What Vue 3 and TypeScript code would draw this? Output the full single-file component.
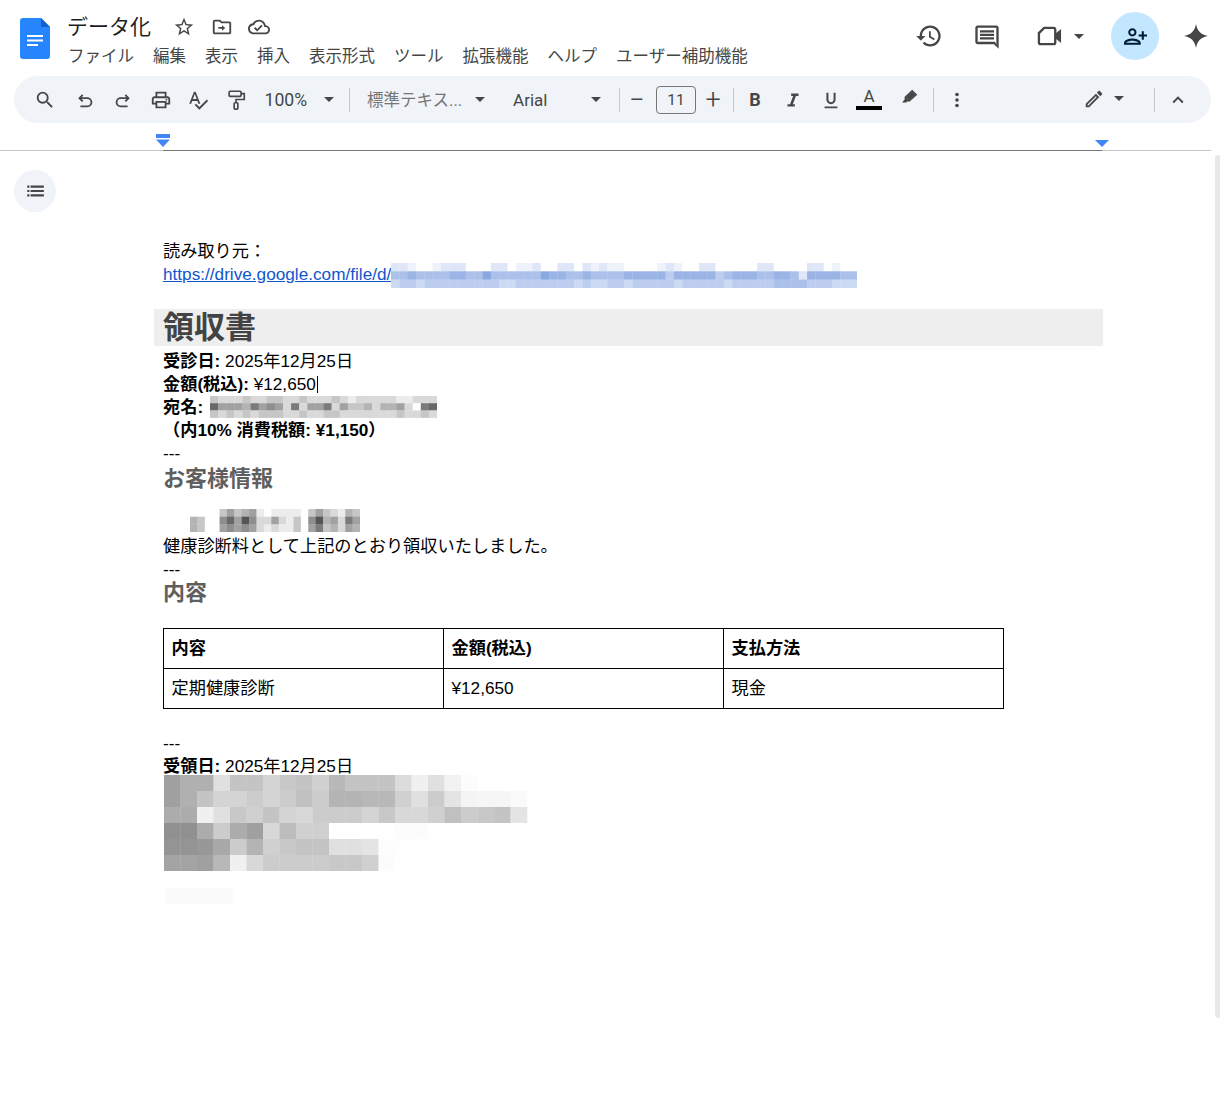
<script setup lang="ts">
interface Cell { x: number; y: number; w: number; h: number; fill: string }

const mix = (level: number, r: number, g: number, b: number): string => {
  const t = level / 9
  const c = (v: number) => Math.round(255 - (255 - v) * t)
  return `rgb(${c(r)},${c(g)},${c(b)})`
}

const fromLevels = (rows: string[], width: number, ch: number, base: [number, number, number]): Cell[] => {
  const out: Cell[] = []
  rows.forEach((row, ry) => {
    const cw = width / row.length
    row.split('').forEach((l, i) => {
      out.push({ x: i * cw, y: ry * ch, w: cw + 0.3, h: ch + 0.3, fill: mix(Number(l), base[0], base[1], base[2]) })
    })
  })
  return out
}

const urlMosaic = fromLevels(
  [
    '22100122200022011200220212110000121002200000220000220100',
    '55655556655755555576655655556666646666645666556652666655',
    '34434444444443344444443433443444443444443444445555444333',
  ],
  466, 8.3, [105, 143, 218],
)

const nameMosaic = fromLevels(
  [
    '3222322332232223212222211222',
    '8555475652725572533424452078',
    '3232323332232233222222232232',
  ],
  227, 7.2, [85, 85, 85],
)

const clientMosaic = fromLevels(
  [
    '00003534510111103532143',
    '43006859622521306945275',
    '43005656521211305734254',
  ],
  170, 7.7, [85, 85, 85],
)

const bigRows = [
  'a0 b0 b0 e0 c4 c4 d4 c8 c4 d0 b8 c4 c4 c4 dc f0 e0 f2 fc ff ff ff',
  'a0 b0 c4 d4 d4 cc d4 cc c0 cc b4 b4 b8 b8 d0 e0 cc e4 f4 f6 f6 fa',
  'ac ac f0 e0 c8 d0 c4 d4 d8 cc cc cc d4 c8 d8 d8 d0 c0 cc c8 c4 e4',
  '90 90 ac cc ac a0 d8 bc d0 d0 ff ff ff ff fc fc ff ff ff ff ff ff',
  '94 94 98 a8 cc b4 d0 c8 c4 c4 e0 e0 e4 fd fe ff ff ff ff ff ff ff',
  'a4 a4 a0 b8 f0 d8 cc cc cc cc c8 c8 d0 fc ff ff ff ff ff ff ff ff',
]
const bigMosaic: Cell[] = bigRows.flatMap((row, ry) =>
  row.split(' ').map((hex, i) => ({ x: i * 16.5, y: ry * 16, w: 16.8, h: 16.3, fill: `#${hex}${hex}${hex}` })),
)

const menus = ['ファイル', '編集', '表示', '挿入', '表示形式', 'ツール', '拡張機能', 'ヘルプ', 'ユーザー補助機能']
const headers = ['内容', '金額(税込)', '支払方法']
const cells = ['定期健康診断', '¥12,650', '現金']
</script>

<template>
  <div class="page">
    <header class="appbar">
      <svg class="logo" viewBox="0 0 30 41">
        <path d="M3 0h18l9 9v29a3 3 0 0 1-3 3H3a3 3 0 0 1-3-3V3a3 3 0 0 1 3-3z" fill="#2684fc" />
        <path d="M21 0l9 9h-9z" fill="#1a5fc8" />
        <path d="M7 17h16v2H7zM7 21.500h16v2H7zM7 26h11v2H7z" fill="#fff" />
      </svg>
      <div class="titles">
        <div class="title-row">
          <span class="doc-name">データ化</span>
          <svg class="ic title-star" viewBox="0 0 24 24"><path d="M22 9.240l-7.190-.62L12 2 9.190 8.630 2 9.240l5.460 4.730L5.820 21 12 17.270 18.180 21l-1.630-7.030L22 9.240zM12 15.400l-3.760 2.270 1-4.280-3.320-2.880 4.380-.38L12 6.100l1.710 4.040 4.380.38-3.320 2.880 1 4.280L12 15.400z" /></svg>
          <svg class="ic title-folder" viewBox="0 0 24 24"><path d="M20 6h-8l-2-2H4c-1.110 0-1.990.89-1.990 2L2 18c0 1.110.89 2 2 2h16c1.110 0 2-.89 2-2V8c0-1.110-.89-2-2-2zm0 12H4V6h5.170l2 2H20v10zm-8-4H8v-2h4v-2l3.500 3-3.500 3v-2z" /></svg>
          <svg class="ic title-cloud" viewBox="0 0 24 24"><path d="M19.350 10.040C18.670 6.590 15.640 4 12 4 9.110 4 6.600 5.640 5.350 8.040 2.340 8.360 0 10.910 0 14c0 3.310 2.690 6 6 6h13c2.760 0 5-2.240 5-5 0-2.640-2.050-4.780-4.650-4.960zM19 18H6c-2.210 0-4-1.790-4-4 0-2.050 1.530-3.760 3.560-3.970l1.070-.11.5-.95C8.080 7.140 9.940 6 12 6c2.620 0 4.880 1.860 5.390 4.430l.3 1.500 1.530.11c1.560.1 2.780 1.410 2.780 2.960 0 1.650-1.350 3-3 3zm-9-3.820l-2.090-2.090L6.500 13.500 10 17l6.010-6.010-1.410-1.410z" /></svg>
        </div>
        <nav class="menu">
          <span v-for="m in menus" :key="m">{{ m }}</span>
        </nav>
      </div>
      <div class="actions">
        <svg class="ic big history" viewBox="0 0 24 24"><path d="M13 3c-4.970 0-9 4.030-9 9H1l3.890 3.890.07.14L9 12H6c0-3.870 3.130-7 7-7s7 3.130 7 7-3.130 7-7 7c-1.930 0-3.680-.79-4.940-2.060l-1.420 1.420C8.270 19.990 10.510 21 13 21c4.970 0 9-4.030 9-9s-4.030-9-9-9zm-1 5v5l4.280 2.540.72-1.210-3.500-2.080V8H12z" /></svg>
        <svg class="ic big comment" viewBox="0 0 24 24"><path d="M20 3H4c-1.100 0-2 .9-2 2v12c0 1.100.9 2 2 2h14l4 4V5c0-1.100-.9-2-2-2zm0 16.170L18.830 17H4V5h16v14.170zM6 7h12v2H6zm0 3h12v2H6zm0 3h12v2H6z" /></svg>
        <svg class="ic big video" viewBox="0 0 24 24">
          <path d="M7 5h8a1.500 1.500 0 0 1 1.500 1.500v11A1.500 1.500 0 0 1 15 19H4a1.500 1.500 0 0 1-1.500-1.500v-8z" fill="none" stroke="#444746" stroke-width="2" />
          <path d="M16.500 10l5-4v12l-5-4z" />
        </svg>
        <i class="caret video-caret"></i>
        <button class="share">
          <svg class="ic share-ic" viewBox="0 0 24 24"><path transform="matrix(-1 0 0 1 24 0)" d="M15 12c2.210 0 4-1.790 4-4s-1.790-4-4-4-4 1.790-4 4 1.790 4 4 4zm0-6c1.100 0 2 .9 2 2s-.9 2-2 2-2-.9-2-2 .9-2 2-2zm0 8c-2.670 0-8 1.340-8 4v2h16v-2c0-2.660-5.330-4-8-4zm-6 4c.22-.72 3.310-2 6-2 2.700 0 5.800 1.290 6 2H9zm-3-3v-3h3v-2H6V7H4v3H1v2h3v3h2z" /></svg>
        </button>
        <svg class="ic spark" viewBox="0 0 24 24"><path d="M12 1C13.200 7.500 16.500 10.800 23 12 16.500 13.200 13.200 16.500 12 23 10.800 16.500 7.500 13.200 1 12 7.500 10.800 10.800 7.500 12 1z" /></svg>
      </div>
    </header>

    <div class="toolbar">
      <button class="tb search-btn"><svg class="ic tool" viewBox="0 0 24 24"><path d="M15.500 14h-.79l-.28-.27A6.470 6.470 0 0 0 16 9.500 6.500 6.500 0 1 0 9.500 16c1.610 0 3.090-.59 4.230-1.570l.27.28v.79l5 4.990L20.490 19l-4.990-5zm-6 0C7.010 14 5 11.990 5 9.500S7.010 5 9.500 5 14 7.010 14 9.500 11.990 14 9.500 14z" /></svg></button>
      <button class="tb"><svg class="ic tool stroke" viewBox="0 0 24 24"><path d="M9.500 6.500L6 10l3.500 3.500M6 10h8.500a4.500 4.500 0 0 1 0 9H7" /></svg></button>
      <button class="tb"><svg class="ic tool stroke" viewBox="0 0 24 24"><path d="M14.500 6.500L18 10l-3.500 3.500M18 10H9.500a4.500 4.500 0 0 0 0 9H17" /></svg></button>
      <button class="tb"><svg class="ic tool" viewBox="0 0 24 24"><path d="M19 8h-1V3H6v5H5c-1.660 0-3 1.340-3 3v6h4v4h12v-4h4v-6c0-1.660-1.340-3-3-3zM8 5h8v3H8V5zm8 12v2H8v-4h8v2zm2-2v-2H6v2H4v-4c0-.55.45-1 1-1h14c.55 0 1 .45 1 1v4h-2z" /><circle cx="18" cy="11.500" r="1" /></svg></button>
      <button class="tb"><svg class="ic tool" viewBox="0 0 24 24"><path d="M12.450 16h2.090L9.430 3H7.570L2.460 16h2.090l1.120-3h5.640l1.140 3zm-6.020-5L8.500 5.480 10.570 11H6.430zm15.160.59l-8.090 8.090L9.830 16l-1.410 1.410 5.090 5.090L23 13l-1.410-1.410z" /></svg></button>
      <button class="tb"><svg class="ic tool stroke paint" viewBox="0 0 24 24"><rect x="4.500" y="2.500" width="13" height="5.500" rx="1" /><path d="M17.500 5H21v6.500h-9V15" /><rect x="10" y="15" width="4" height="7" rx="1" /></svg></button>
      <span class="tb-text zoom-val">100%</span>
      <i class="caret zoom-caret"></i>
      <i class="sep sep-a"></i>
      <span class="tb-text style-val">標準テキス...</span>
      <i class="caret style-caret"></i>
      <span class="tb-text font-val">Arial</span>
      <i class="caret font-caret"></i>
      <i class="sep sep-b"></i>
      <span class="pm minus">−</span>
      <span class="size-box">11</span>
      <span class="pm plus">+</span>
      <i class="sep sep-c"></i>
      <button class="tb fmt bold">B</button>
      <button class="tb fmt"><svg class="ic tool" viewBox="0 0 24 24"><path d="M10 5v2.500h2.210l-3.420 9H6V19h8v-2.500h-2.210l3.420-9H18V5z" /></svg></button>
      <button class="tb fmt"><svg class="ic tool" viewBox="0 0 24 24"><path d="M12 16.500c2.900 0 5-2.100 5-5V4h-2.200v7.500c0 1.700-1.200 2.900-2.800 2.900s-2.800-1.200-2.800-2.900V4H7v7.500c0 2.900 2.100 5 5 5zM5 19v2h14v-2z" /></svg></button>
      <button class="tb color-a"><span class="a-letter">A</span><span class="a-bar"></span></button>
      <button class="tb hl"><svg class="ic tool" viewBox="0 0 24 24"><path d="M15.500 3l5.500 5.500-8.500 7.500-2-.5-1.500 1.500H4.500L7.500 13l-.5-2zM9.300 11.500l3.200 3 6-5.400-3-3z" /><path d="M9 11.200L15.400 5.500 19 9l-6.600 6z" /></svg></button>
      <i class="sep sep-d"></i>
      <button class="tb more"><svg class="ic tool" viewBox="0 0 24 24"><circle cx="12" cy="6" r="2" /><circle cx="12" cy="12" r="2" /><circle cx="12" cy="18" r="2" /></svg></button>
      <button class="tb pencil"><svg class="ic tool" viewBox="0 0 24 24"><path d="M3 17.250V21h3.750L17.810 9.940l-3.750-3.750L3 17.250zM5.920 19H5v-.92l9.060-9.060.92.92L5.920 19zM20.710 5.630l-2.340-2.340c-.2-.2-.45-.29-.71-.29s-.51.1-.7.29l-1.830 1.830 3.750 3.750 1.830-1.830c.39-.39.39-1.020 0-1.410z" /></svg></button>
      <i class="caret pencil-caret"></i>
      <i class="sep sep-e"></i>
      <button class="tb"><svg class="ic tool" viewBox="0 0 24 24"><path d="M7.410 15.410L12 10.830l4.590 4.580L18 14l-6-6-6 6z" /></svg></button>
    </div>

    <div class="ruler">
      <svg class="marker marker-left" viewBox="0 0 14 13"><path d="M0 0h14v4H0zM0 5.500h14L7 13z" /></svg>
      <svg class="marker marker-right" viewBox="0 0 14 7"><path d="M0 0h14L7 7z" /></svg>
      <div class="ruler-line">
        <span class="rl-side rl-left"></span>
        <span class="rl-mid"></span>
        <span class="rl-side rl-right"></span>
      </div>
    </div>

    <button class="outline-btn">
      <svg viewBox="0 0 18 18" class="outline-ic"><path d="M2 4h2v2H2zM5 4h12v2H5zM2 8h2v2H2zM5 8h12v2H5zM2 12h2v2H2zM5 12h12v2H5z" /></svg>
    </button>
    <i class="scroll-thumb"></i>

    <main class="doc">
      <p class="line">読み取り元：</p>
      <p class="line"><a class="link">https://drive.google.com/file/d/</a><svg class="mosaic url-mosaic" width="466" height="25"><rect v-for="(c, i) in urlMosaic" :key="i" :x="c.x" :y="c.y" :width="c.w" :height="c.h" :fill="c.fill" /></svg></p>
      <p class="line"></p>
      <h1 class="h1">領収書</h1>
      <p class="line"><b>受診日:</b> 2025年12月25日</p>
      <p class="line"><b>金額(税込):</b> ¥12,650<span class="cursor"></span></p>
      <p class="line"><b>宛名:</b> <svg class="mosaic name-mosaic" width="227" height="22"><rect v-for="(c, i) in nameMosaic" :key="i" :x="c.x" :y="c.y" :width="c.w" :height="c.h" :fill="c.fill" /></svg></p>
      <p class="line"><b>（内10% 消費税額: ¥1,150）</b></p>
      <p class="line">---</p>
      <h2 class="h2 first-h2">お客様情報</h2>
      <p class="line client-line"><svg class="mosaic client-mosaic" width="170" height="23"><rect v-for="(c, i) in clientMosaic" :key="i" :x="c.x" :y="c.y" :width="c.w" :height="c.h" :fill="c.fill" /></svg></p>
      <p class="line">健康診断料として上記のとおり領収いたしました。</p>
      <p class="line short-line">---</p>
      <h2 class="h2 second-h2">内容</h2>
      <table class="tbl">
        <tbody>
          <tr><th v-for="h in headers" :key="h">{{ h }}</th></tr>
          <tr><td v-for="c in cells" :key="c">{{ c }}</td></tr>
        </tbody>
      </table>
      <p class="line after-table">---</p>
      <p class="line"><b>受領日:</b> 2025年12月25日</p>
      <svg class="mosaic big-mosaic" width="365" height="96"><rect v-for="(c, i) in bigMosaic" :key="i" :x="c.x" :y="c.y" :width="c.w" :height="c.h" :fill="c.fill" /></svg>
      <div class="faint"></div>
    </main>
  </div>
</template>

<style scoped>
.page { position: relative; width: 1220px; height: 1117px; overflow: hidden; background: #fff; font-family: "Liberation Sans", "Noto Sans CJK JP", sans-serif; color: #000; }
button { border: 0; background: none; padding: 0; font: inherit; color: inherit; }
.ic { fill: #444746; display: block; flex: none; }
.appbar { display: flex; height: 76px; padding-left: 20px; box-sizing: border-box; }
.logo { width: 30px; height: 41px; margin-top: 18px; flex: none; }
.titles { margin-left: 17px; width: 700px; }
.title-row { display: flex; align-items: center; height: 28px; margin-top: 11px; }
.doc-name { font-family: "Noto Sans CJK JP", sans-serif; font-size: 21px; line-height: 28px; color: #1f1f1f; width: 84px; flex: none; white-space: nowrap; }
.title-star { width: 22px; height: 22px; margin-left: 22px; margin-top: 3px; }
.title-folder { width: 22px; height: 22px; margin-left: 16px; margin-top: 3px; }
.title-cloud { width: 22px; height: 22px; margin-left: 15px; margin-top: 3px; }
.menu { display: flex; gap: 19px; margin-top: 4px; padding-left: 1px; font-family: "Noto Sans CJK JP", sans-serif; font-size: 16.500px; line-height: 24px; color: #444746; white-space: nowrap; }
.actions { display: flex; align-items: center; height: 48px; margin-top: 12px; margin-left: 147px; }
.big { width: 28px; height: 28px; }
.history { margin-left: 1px; }
.comment { margin-left: 30px; }
.video { margin-left: 35px; }
.video-caret { margin-left: 10px; }
.share { width: 48px; height: 48px; border-radius: 50%; background: #c2e7ff; display: flex; align-items: center; justify-content: center; margin-left: 27px; }
.share-ic { width: 25px; height: 25px; fill: #001d35; }
.spark { width: 26px; height: 26px; margin-left: 24px; }
.caret { display: block; flex: none; width: 0; height: 0; border-left: 5px solid transparent; border-right: 5px solid transparent; border-top: 5px solid #444746; }
.toolbar { display: flex; align-items: center; width: 1197px; height: 47px; margin-left: 14px; padding-left: 12px; box-sizing: border-box; background: #f0f4f9; border-radius: 24px; }
.tb { width: 37.6px; height: 38px; display: flex; align-items: center; justify-content: center; flex: none; }
.search-btn { margin-right: 3px; }
.tool { width: 22px; height: 22px; }
.stroke { fill: none; stroke: #444746; stroke-width: 2; }
.paint { stroke-width: 1.800; }
.tb-text { font-family: Roboto, "Noto Sans CJK JP", sans-serif; font-size: 17px; color: #444746; white-space: nowrap; flex: none; }
.zoom-val { width: 50px; margin-left: 10px; font-size: 17.600px; }
.zoom-caret { margin-left: 9.500px; }
.sep { display: block; flex: none; width: 1px; height: 24px; background: #c7c7c7; }
.sep-a { margin-left: 15px; }
.style-val { width: 100px; margin-left: 17px; color: #747775; font-size: 16.500px; margin-top: -2px; }
.style-caret { margin-left: 8px; }
.font-val { width: 70px; margin-left: 28px; }
.font-caret { margin-left: 8px; }
.sep-b { margin-left: 18px; }
.pm { width: 24px; text-align: center; flex: none; font-family: Roboto, sans-serif; font-weight: 300; font-size: 27px; line-height: 24px; color: #444746; }
.minus { margin-left: 5px; }
.size-box { width: 40px; height: 28px; margin-left: 7px; box-sizing: border-box; border: 1px solid #747775; border-radius: 4px; text-align: center; font-family: Roboto, sans-serif; font-size: 15.500px; line-height: 26px; color: #444746; flex: none; }
.plus { margin-left: 5px; }
.sep-c { margin-left: 8px; }
.fmt { width: 38px; }
.bold { margin-left: 2px; font-family: Roboto, sans-serif; font-weight: 700; font-size: 18px; color: #444746; }
.color-a { position: relative; width: 38px; flex-direction: column; }
.a-letter { font-family: Roboto, sans-serif; font-size: 17px; line-height: 17px; color: #444746; margin-top: -2px; }
.a-bar { width: 26px; height: 4px; background: #000; margin-top: 1px; }
.hl { margin-left: 2px; margin-top: -4px; width: 38px; }
.sep-d { margin-left: 5px; }
.more { margin-left: 4px; width: 38px; }
.pencil { width: 38px; margin-left: 99px; margin-top: -1px; }
.pencil-caret { margin-left: 1px; margin-top: -2px; }
.sep-e { margin-left: 30px; }
.toolbar .tb:last-child { margin-left: 4px; width: 38px; }
.ruler { position: relative; height: 28px; }
.ruler-line { position: absolute; left: 0; right: 0; bottom: 0; display: flex; height: 1px; }
.rl-side { height: 1px; background: #c4c7c5; }
.rl-left { width: 163px; }
.rl-right { width: 109px; }
.rl-mid { width: 939px; background: #747775; }
.marker { position: absolute; fill: #4285f4; }
.marker-left { left: 156px; top: 11px; width: 14px; height: 13px; }
.marker-right { left: 1095px; top: 17px; width: 14px; height: 7px; }
.outline-btn { position: absolute; left: 14px; top: 170px; width: 42px; height: 42px; border-radius: 50%; background: #f0f4f9; display: flex; align-items: center; justify-content: center; }
.outline-ic { width: 20px; height: 20px; fill: #444746; }
.scroll-thumb { position: absolute; left: 1215px; top: 155px; width: 5px; height: 863px; background: #e8e8e8; border-radius: 4px 0 0 4px; }
.doc { margin-left: 163px; width: 841px; padding-top: 88.500px; font-size: 17.200px; }
.line { margin: 0; height: 23px; line-height: 23px; white-space: nowrap; }
.short-line { height: 22px; }
.link { color: #1155cc; text-decoration: underline; }
.mosaic { filter: blur(0.5px); }
.url-mosaic { vertical-align: top; margin-top: 0; }
.name-mosaic { vertical-align: top; margin-left: 2px; }
.client-mosaic { display: block; margin-left: 27px; }
.h1 { margin: 0 0 4.500px -9px; width: 949px; height: 37px; padding-left: 9px; box-sizing: border-box; background: #eeeeee; color: #434343; font-size: 31px; line-height: 37px; font-weight: 700; }
.h2 { margin: 0; height: 28px; color: #5f5f5f; font-size: 22px; line-height: 28px; font-weight: 700; }
.first-h2 { margin-bottom: 16px; }
.second-h2 { margin-top: -1px; }
.client-line { height: 26px; }
.cursor { display: inline-block; width: 1px; height: 17px; margin-left: 1px; background: #000; vertical-align: -3px; }
.tbl { border-collapse: collapse; table-layout: fixed; width: 841px; margin-top: 21px; }
.tbl th, .tbl td { height: 40px; padding: 0 7.500px; border: 1.300px solid #000; text-align: left; font-size: 17.200px; line-height: 23px; box-sizing: border-box; }
.tbl th { font-weight: 700; }
.tbl td { font-weight: 400; }
.after-table { margin-top: 22.500px; }
.big-mosaic { display: block; margin: -3px 0 0 1px; }
.faint { width: 68px; height: 16px; margin: 17px 0 0 2px; background: #fbfbfb; }
</style>
